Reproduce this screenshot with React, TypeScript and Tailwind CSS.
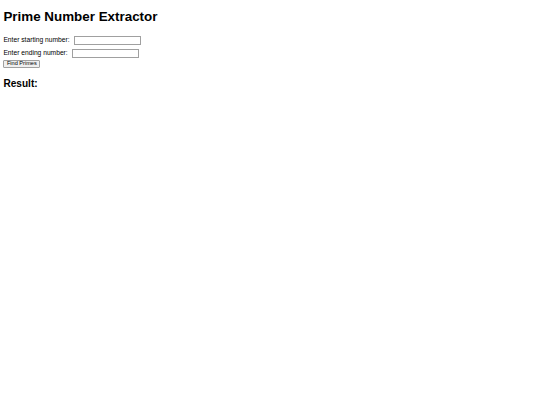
export default function App() {
  return (
    <div className="min-h-[405px] bg-white px-[3.4px] font-['Liberation_Sans',Arial,sans-serif] text-black">
      <h1 className="pt-[8.5px] pb-[9.5px] text-[13.4px] font-bold leading-[15.5px]">Prime Number Extractor</h1>

      <div className="flex flex-col">
        <div className="flex h-[13px] items-center text-[6.7px]">
          <label htmlFor="start">Enter starting number:</label>
          <input
            id="start"
            type="number"
            className="ml-[4px] h-[9px] w-[67px] border border-[#a0a0a0] bg-white"
          />
        </div>
        <div className="flex h-[13px] items-center text-[6.7px]">
          <label htmlFor="end">Enter ending number:</label>
          <input
            id="end"
            type="number"
            className="ml-[4px] h-[9px] w-[67px] border border-[#a0a0a0] bg-white"
          />
        </div>
        <div className="flex h-[9px] items-center">
          <button
            type="button"
            className="h-[8.5px] rounded-[1px] border border-[#a0a0a0] bg-[#efefef] px-[2.5px] text-[5.6px] leading-none"
          >
            Find Primes
          </button>
        </div>
      </div>

      <h2 className="pt-[9px] text-[10.1px] font-bold leading-[11.7px]">Result:</h2>
      <div id="result" />
    </div>
  );
}
